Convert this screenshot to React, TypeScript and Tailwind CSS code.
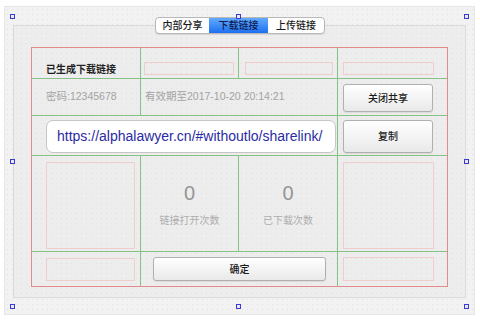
import React from 'react'

const dots = 'bg-[radial-gradient(#e1e1e1_0.5px,transparent_0.7px)] bg-[length:5px_5px]'

const Handle = ({ className }: { className: string }) => (
  <div className={`absolute w-[5px] h-[5px] border border-[#3a3ad0] bg-[#e6e6ff] ${className}`} />
)

const Placeholder = ({ className }: { className: string }) => (
  <div className={`border border-[#efcdcd] ${className}`} />
)

const MacButton = ({ label, className }: { label: string; className: string }) => (
  <button className={`flex items-center justify-center rounded-[3px] border border-[#b0b0b0] bg-gradient-to-b from-white to-[#e9e9e9] text-[10px] font-medium text-[#1a1a1a] shadow-[0_1px_1px_rgba(0,0,0,0.08)] ${className}`}>
    {label}
  </button>
)

function Tabs() {
  const tabs = [
    { label: '内部分享', w: 'w-[53px]', active: false },
    { label: '下载链接', w: 'w-[59px]', active: true },
    { label: '上传链接', w: 'w-[56px]', active: false },
  ]
  return (
    <div className="absolute top-[-9px] left-[141px] flex h-[17px] rounded-[4px] border border-[#b8b8b8] bg-white overflow-hidden shadow-[0_1px_1px_rgba(0,0,0,0.1)]">
      {tabs.map(t => (
        <div
          key={t.label}
          className={`${t.w} flex items-center justify-center text-[10px] font-medium ${
            t.active ? 'bg-gradient-to-b from-[#62aafc] to-[#1c6ff0] text-[#0e1d55]' : 'text-[#1a1a1a]'
          }`}
        >
          {t.label}
        </div>
      ))}
    </div>
  )
}

// green guide lines between cells, red frame around the whole table
const line = 'border-[#86c186]'
const cell = `border-r border-b ${line}`

function ShareGrid() {
  return (
    <div className="grid grid-cols-[109px_98px_99px_109px] grid-rows-[31px_37px_40px_96px_34px] border border-[#e38a8a] w-[417px]">
      {/* row 1 */}
      <div className={`${cell} pl-[14px] pt-[14px] text-[10px] font-bold text-[#1f1f1f]`}>已生成下载链接</div>
      <div className={cell}><Placeholder className="ml-[3px] mt-[14px] w-[90px] h-[13px]" /></div>
      <div className={cell}><Placeholder className="ml-[6px] mt-[14px] w-[88px] h-[13px]" /></div>
      <div className={`border-b ${line}`}><Placeholder className="ml-[5px] mt-[14px] w-[91px] h-[13px]" /></div>

      {/* row 2 */}
      <div className={`${cell} flex items-center pl-[14px] text-[10.5px] text-[#a3a3a3]`}>密码:12345678</div>
      <div className={`${cell} col-span-2 flex items-center pl-[4px] text-[10.5px] text-[#a3a3a3]`}>有效期至2017-10-20 20:14:21</div>
      <div className={`border-b ${line}`}>
        <MacButton label="关闭共享" className="ml-[5px] mt-[5px] w-[90px] h-[28px]" />
      </div>

      {/* row 3 */}
      <div className={`${cell} col-span-3`}>
        <div className="ml-[14px] mt-[4px] w-[290px] h-[33px] rounded-[7px] border border-[#c6c6c6] bg-white flex items-center pl-[10px] text-[14px] text-[#2b2ba3]">
          https://alphalawyer.cn/#withoutlo/sharelink/
        </div>
      </div>
      <div className={`border-b ${line}`}>
        <MacButton label="复制" className="ml-[5px] mt-[4px] w-[90px] h-[33px]" />
      </div>

      {/* row 4 */}
      <div className={cell}><Placeholder className="ml-[14px] mt-[6px] w-[89px] h-[87px]" /></div>
      <div className={`${cell} flex flex-col items-center pt-[26px] gap-[9px]`}>
        <span className="text-[20px] leading-[23px] text-[#959595]">0</span>
        <span className="text-[10px] leading-[14px] text-[#adadad]">链接打开次数</span>
      </div>
      <div className={`${cell} flex flex-col items-center pt-[26px] gap-[9px]`}>
        <span className="text-[20px] leading-[23px] text-[#959595]">0</span>
        <span className="text-[10px] leading-[14px] text-[#adadad]">已下载次数</span>
      </div>
      <div className={`border-b ${line}`}><Placeholder className="ml-[5px] mt-[6px] w-[91px] h-[87px]" /></div>

      {/* row 5 */}
      <div className={`border-r ${line}`}><Placeholder className="ml-[14px] mt-[6px] w-[89px] h-[23px]" /></div>
      <div className={`border-r ${line} col-span-2`}>
        <MacButton label="确定" className="ml-[12px] mt-[5px] w-[173px] h-[24px]" />
      </div>
      <div><Placeholder className="ml-[5px] mt-[5px] w-[91px] h-[24px]" /></div>
    </div>
  )
}

export default function App() {
  return (
    <div className="relative w-[480px] h-[320px] bg-white pl-[4px] pt-[6px] font-['Liberation_Sans','Noto_Sans_CJK_SC',sans-serif] overflow-hidden">
      <div className={`w-[471px] h-[309px] border border-[#e6e6e6] bg-[#f2f2f2] ${dots} pl-[8px] pt-[18px]`}>
        <div className={`relative w-[453px] h-[273px] border border-[#dadada] bg-[#ededed] ${dots} pl-[17px] pt-[21px]`}>
          <Tabs />
          <ShareGrid />
        </div>
      </div>

      <Handle className="left-[10px] top-[14px]" />
      <Handle className="left-[236px] top-[14px]" />
      <Handle className="left-[464px] top-[14px]" />
      <Handle className="left-[10px] top-[159px]" />
      <Handle className="left-[464px] top-[159px]" />
      <Handle className="left-[10px] top-[304px]" />
      <Handle className="left-[236px] top-[304px]" />
      <Handle className="left-[464px] top-[304px]" />
    </div>
  )
}
